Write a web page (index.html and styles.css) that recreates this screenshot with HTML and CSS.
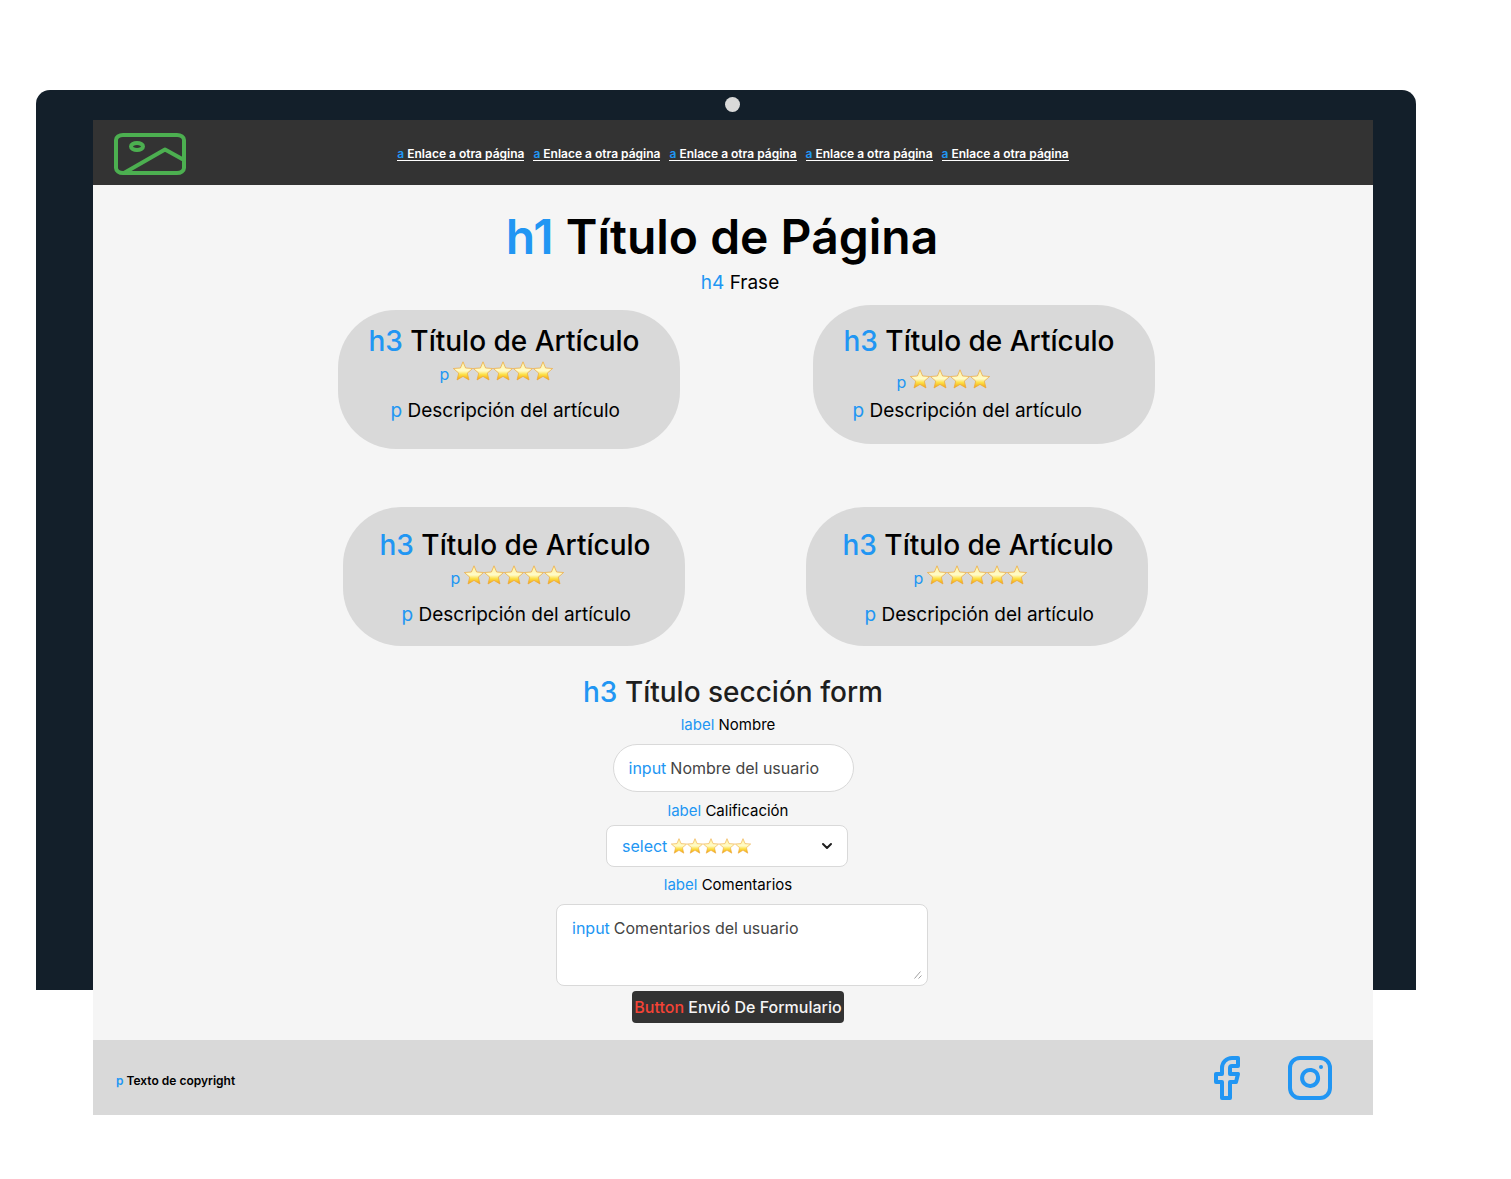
FILE: index.html
```html
<!DOCTYPE html>
<html lang="es">
<head>
<meta charset="utf-8">
<meta name="viewport" content="width=device-width, initial-scale=1">
<title>Título de Página</title>
<link rel="stylesheet" href="styles.css">
</head>
<body>
<svg class="defs" width="0" height="0" aria-hidden="true">
  <defs>
    <linearGradient id="gold" x1="0" y1="0" x2="0" y2="1">
      <stop offset="0" stop-color="#fff3a0"/>
      <stop offset="0.5" stop-color="#fffbc8"/>
      <stop offset="0.7" stop-color="#fde047"/>
      <stop offset="1" stop-color="#f0a010"/>
    </linearGradient>
    <symbol id="star" viewBox="0 0 20 20">
      <path d="M10 .8 12.600 7 19.600 7.500 14.300 12.100 16 19 10 15.400 4 19 5.700 12.100.4 7.500 7.400 7Z" fill="url(#gold)" stroke="#eda63a" stroke-width=".7" stroke-linejoin="round"/>
    </symbol>
    <symbol id="stars5" viewBox="0 0 100 20">
      <use href="#star" width="20" height="20"/>
      <use href="#star" x="20" width="20" height="20"/>
      <use href="#star" x="40" width="20" height="20"/>
      <use href="#star" x="60" width="20" height="20"/>
      <use href="#star" x="80" width="20" height="20"/>
    </symbol>
    <symbol id="stars4" viewBox="0 0 80 20">
      <use href="#star" width="20" height="20"/>
      <use href="#star" x="20" width="20" height="20"/>
      <use href="#star" x="40" width="20" height="20"/>
      <use href="#star" x="60" width="20" height="20"/>
    </symbol>
  </defs>
</svg>

<div class="device">
  <span class="camera"></span>
  <div class="screen">
    <header class="topbar">
      <svg class="logo" viewBox="0 0 72 42" fill="none" stroke="#4caf50" stroke-width="4" stroke-linecap="round" stroke-linejoin="round" role="img" aria-label="Logo">
        <rect x="2" y="2" width="68" height="38" rx="7" ry="5"/>
        <ellipse cx="23" cy="13.500" rx="6" ry="3.500"/>
        <path d="M70 27 51 16.500 10 40"/>
      </svg>
      <nav class="links">
        <a href="#"><span class="tag">a</span> Enlace a otra página</a>
        <a href="#"><span class="tag">a</span> Enlace a otra página</a>
        <a href="#"><span class="tag">a</span> Enlace a otra página</a>
        <a href="#"><span class="tag">a</span> Enlace a otra página</a>
        <a href="#"><span class="tag">a</span> Enlace a otra página</a>
      </nav>
    </header>

    <main>
      <h1><span class="tag">h1</span> Título de Página</h1>
      <h4><span class="tag">h4</span> Frase</h4>

      <section class="row row-top">
        <article class="card">
          <h3><span class="tag">h3</span> Título de Artículo</h3>
          <p class="rating"><span class="tag">p</span> <svg class="stars" width="100" height="20" role="img" aria-label="5 estrellas"><use href="#stars5"/></svg></p>
          <p class="text"><span class="tag">p</span> Descripción del artículo</p>
        </article>
        <article class="card card-raised">
          <h3><span class="tag">h3</span> Título de Artículo</h3>
          <p class="rating"><span class="tag">p</span> <svg class="stars" width="80" height="20" role="img" aria-label="4 estrellas"><use href="#stars4"/></svg></p>
          <p class="text"><span class="tag">p</span> Descripción del artículo</p>
        </article>
      </section>

      <section class="row row-bottom">
        <article class="card">
          <h3><span class="tag">h3</span> Título de Artículo</h3>
          <p class="rating"><span class="tag">p</span> <svg class="stars" width="100" height="20" role="img" aria-label="5 estrellas"><use href="#stars5"/></svg></p>
          <p class="text"><span class="tag">p</span> Descripción del artículo</p>
        </article>
        <article class="card">
          <h3><span class="tag">h3</span> Título de Artículo</h3>
          <p class="rating"><span class="tag">p</span> <svg class="stars" width="100" height="20" role="img" aria-label="5 estrellas"><use href="#stars5"/></svg></p>
          <p class="text"><span class="tag">p</span> Descripción del artículo</p>
        </article>
      </section>

      <form class="form">
        <h3 class="form-title"><span class="tag">h3</span> Título sección form</h3>

        <label for="nombre"><span class="tag">label</span> Nombre</label>
        <div class="field field-name">
          <span class="tag">input</span>
          <input id="nombre" type="text" placeholder="Nombre del usuario">
        </div>

        <label for="calificacion"><span class="tag">label</span> Calificación</label>
        <div class="field field-select">
          <span class="tag">select</span>
          <select id="calificacion">
            <option value="5" aria-label="5 estrellas"></option>
          </select>
          <svg class="chevron" width="12" height="8" viewBox="0 0 12 8" fill="none" stroke="#1e1e1e" stroke-width="2" stroke-linecap="round" stroke-linejoin="round" aria-hidden="true"><path d="m2 2 4 4 4-4"/></svg>
        </div>

        <label for="comentarios"><span class="tag">label</span> Comentarios</label>
        <div class="field field-comments">
          <span class="tag">input</span>
          <textarea id="comentarios" placeholder="Comentarios del usuario"></textarea>
          <svg class="grip" width="8" height="8" viewBox="0 0 8 8" stroke="#a0a0a0" aria-hidden="true"><path d="M.5 7.500l6-7M4.500 7.500l3-3"/></svg>
        </div>

        <button type="submit"><span class="tag">Button</span> Envió De Formulario</button>
      </form>
    </main>

    <footer class="footer">
      <p><span class="tag">p</span> Texto de copyright</p>
      <div class="social">
        <a href="#" aria-label="Facebook"><svg width="48" height="48" viewBox="0 0 24 24" fill="none" stroke="#2196f3" stroke-width="2" stroke-linecap="round" stroke-linejoin="round"><path d="M18 2h-3a5 5 0 0 0-5 5v3H7v4h3v8h4v-8h3l1-4h-4V7a1 1 0 0 1 1-1h3z"/></svg></a>
        <a href="#" aria-label="Instagram"><svg width="48" height="48" viewBox="0 0 24 24" fill="none" stroke="#2196f3" stroke-width="2" stroke-linecap="round" stroke-linejoin="round"><rect x="2" y="2" width="20" height="20" rx="5"/><path d="M16 11.370A4 4 0 1 1 12.630 8 4 4 0 0 1 16 11.370zM17.500 6.500h.01"/></svg></a>
      </div>
    </footer>
  </div>
</div>
</body>
</html>
```
FILE: styles.css
```css
* {
  box-sizing: border-box;
}

body {
  margin: 0;
  padding: 90px 95px 64px 36px;
  background: #fff;
  color: #000;
  font-family: Inter, "Liberation Sans", sans-serif;
}

h1, h3, h4, p {
  margin: 0;
}

.defs {
  position: absolute;
}

.tag {
  color: #2196f3;
}

/* The bezel stops short of the screen, which hangs out below it */
.device {
  position: relative;
  padding: 30px 43px 0 57px;
  border-radius: 14px 14px 0 0;
  background: linear-gradient(#131f2a, #131f2a) no-repeat;
  background-size: 100% calc(100% - 125px);
}

.camera {
  position: absolute;
  top: 7px;
  left: calc(50% - 1px);
  width: 15px;
  height: 15px;
  border-radius: 50%;
  background: #d9d9d9;
}

.screen {
  background: #f5f5f5;
}

.topbar {
  display: grid;
  grid-template-columns: 1fr auto 1fr;
  align-items: center;
  height: 65px;
  padding: 2px 21px 0;
  background: #333;
}

.logo {
  width: 72px;
  height: 42px;
}

.links {
  display: flex;
  gap: 9px;
  padding-top: 2px;
}

.links a {
  border-bottom: 1px solid #fff;
  color: #fff;
  font-size: 12px;
  font-weight: 600;
  line-height: 12px;
  text-decoration: none;
  white-space: nowrap;
}

main {
  display: flex;
  flex-direction: column;
  padding: 22px 0 17px;
}

h1 {
  padding-right: 22px;
  font-size: 48px;
  font-weight: 600;
  line-height: 60px;
  text-align: center;
}

h4 {
  padding: 4px 0 0 14px;
  font-size: 19px;
  font-weight: 400;
  line-height: 24px;
  text-align: center;
}

.row {
  display: flex;
  justify-content: center;
  align-items: flex-end;
  padding-left: 26px;
}

.row-top {
  gap: 133px;
  height: 144px;
  margin-top: 10px;
}

.row-bottom {
  gap: 121px;
  margin-top: 58px;
  padding-left: 24px;
}

.card {
  width: 342px;
  height: 139px;
  padding: 20px 0 0 37px;
  border-radius: 58px;
  background: #d9d9d9;
  white-space: nowrap;
}

.row-top .card {
  padding: 13px 0 0 31px;
}

.row-top .card-raised {
  align-self: flex-start;
  padding-top: 18px;
}

h3 {
  font-size: 28px;
  font-weight: 500;
  line-height: 36px;
}

.rating {
  display: flex;
  gap: 4px;
  padding-left: 71px;
  font-size: 16px;
  line-height: 26px;
}

.rating .tag {
  padding-top: 2px;
}

.stars {
  margin-top: 2px;
}

.text {
  padding: 11px 0 0 22px;
  font-size: 19px;
  line-height: 26px;
}

.card-raised .rating {
  padding: 8px 0 0 53px;
}

.card-raised .text {
  padding: 3px 0 0 9px;
}

.form {
  display: flex;
  flex-direction: column;
  align-items: center;
  padding-top: 28px;
  color: #1e1e1e;
}

.form-title {
  margin-bottom: 5px;
}

label {
  padding-right: 10px;
  color: #000;
  font-size: 15px;
  line-height: 20px;
}

.field {
  position: relative;
  display: flex;
  gap: 4px;
  padding: 0 15px;
  border: 1px solid #d9d9d9;
  background: #fff;
  font-size: 16px;
  line-height: 20px;
}

.field input,
.field select,
.field textarea {
  flex: 1;
  min-width: 0;
  padding: 0;
  border: 0;
  outline: 0;
  background: none;
  color: #333;
  font: inherit;
}

.field ::placeholder {
  color: #444;
}

.field-name {
  align-items: center;
  width: 241px;
  height: 48px;
  margin: 9px 0 9px;
  border-radius: 24px;
}

.field-select {
  align-items: center;
  width: 242px;
  height: 42px;
  margin: 4px 12px 8px 0;
  border-radius: 8px;
}

.field-select select {
  height: 20px;
  appearance: none;
  background: url("data:image/svg+xml,%3Csvg xmlns='http://www.w3.org/2000/svg' width='80' height='16' viewBox='0 0 100 20'%3E%3Cdefs%3E%3ClinearGradient id='g' x1='0' y1='0' x2='0' y2='1'%3E%3Cstop offset='0' stop-color='%23fff3a0'/%3E%3Cstop offset='.5' stop-color='%23fffbc8'/%3E%3Cstop offset='.7' stop-color='%23fde047'/%3E%3Cstop offset='1' stop-color='%23f0a010'/%3E%3C/linearGradient%3E%3Cpath id='s' d='M10 .8 12.6 7 19.6 7.5 14.3 12.1 16 19 10 15.4 4 19 5.7 12.1.4 7.5 7.4 7Z' fill='url(%23g)' stroke='%23eda63a' stroke-width='.7' stroke-linejoin='round'/%3E%3C/defs%3E%3Cuse href='%23s'/%3E%3Cuse href='%23s' x='20'/%3E%3Cuse href='%23s' x='40'/%3E%3Cuse href='%23s' x='60'/%3E%3Cuse href='%23s' x='80'/%3E%3C/svg%3E") no-repeat left center;
}

.chevron {
  position: absolute;
  top: 16px;
  right: 14px;
  pointer-events: none;
}

.field-comments {
  width: 372px;
  height: 82px;
  margin: 9px 0 5px 18px;
  padding-top: 13px;
  border-radius: 8px;
}

.field-comments textarea {
  resize: none;
}

.grip {
  position: absolute;
  right: 5px;
  bottom: 6px;
}

button {
  height: 32px;
  margin-left: 10px;
  padding: 0 2px;
  border: 0;
  border-radius: 4px;
  background: #333;
  color: #f5f5f5;
  font: 500 16px/20px Inter, "Liberation Sans", sans-serif;
}

button .tag {
  color: #f44336;
}

.footer {
  display: flex;
  justify-content: space-between;
  align-items: center;
  height: 75px;
  padding: 0 39px 0 23px;
  background: #d9d9d9;
  font-size: 12px;
  font-weight: 600;
}

.footer p {
  padding-top: 6px;
}

.social {
  display: flex;
  gap: 36px;
}

.social svg {
  display: block;
}
```
